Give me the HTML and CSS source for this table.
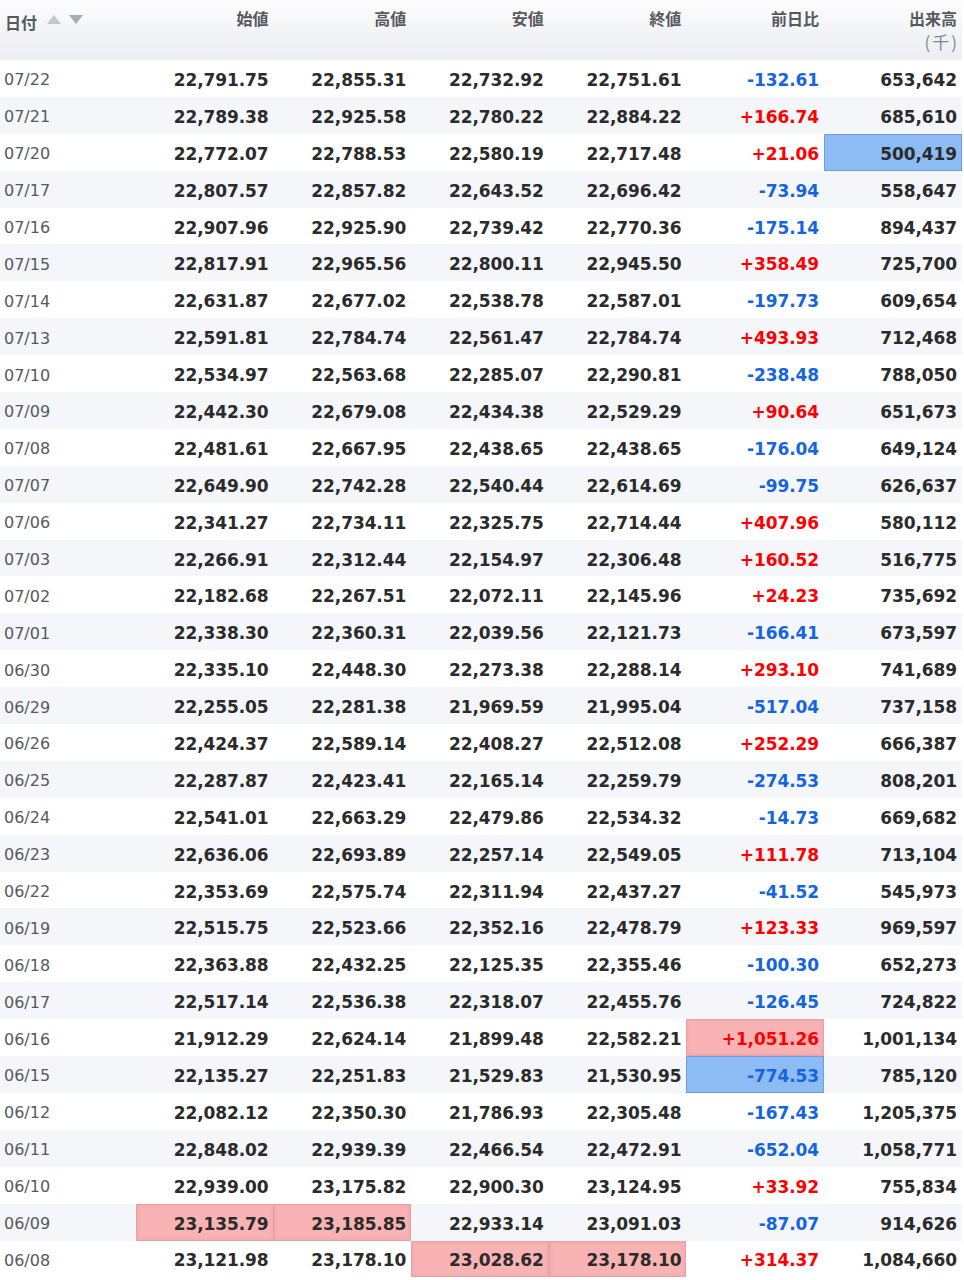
FILE: index.html
```html
<!DOCTYPE html>
<html lang="ja">
<head>
<meta charset="utf-8">
<title>株価履歴</title>
<link rel="stylesheet" href="styles.css">
</head>
<body>
<table class="hist">
  <colgroup>
    <col class="c-date"><col class="c-num"><col class="c-num"><col class="c-num"><col class="c-num"><col class="c-num"><col class="c-vol">
  </colgroup>
  <thead>
    <tr>
      <th class="h-date"><span class="h-label">日付</span><span class="sort"><span class="tri-up"></span><span class="tri-down"></span></span></th>
      <th>始値</th>
      <th>高値</th>
      <th>安値</th>
      <th>終値</th>
      <th>前日比</th>
      <th>出来高<br><span class="unit">(千)</span></th>
    </tr>
  </thead>
  <tbody>
    <tr><td class="d">07/22</td><td>22,791.75</td><td>22,855.31</td><td>22,732.92</td><td>22,751.61</td><td class="dn">-132.61</td><td>653,642</td></tr>
    <tr><td class="d">07/21</td><td>22,789.38</td><td>22,925.58</td><td>22,780.22</td><td>22,884.22</td><td class="up">+166.74</td><td>685,610</td></tr>
    <tr><td class="d">07/20</td><td>22,772.07</td><td>22,788.53</td><td>22,580.19</td><td>22,717.48</td><td class="up">+21.06</td><td class="hl-blue">500,419</td></tr>
    <tr><td class="d">07/17</td><td>22,807.57</td><td>22,857.82</td><td>22,643.52</td><td>22,696.42</td><td class="dn">-73.94</td><td>558,647</td></tr>
    <tr><td class="d">07/16</td><td>22,907.96</td><td>22,925.90</td><td>22,739.42</td><td>22,770.36</td><td class="dn">-175.14</td><td>894,437</td></tr>
    <tr><td class="d">07/15</td><td>22,817.91</td><td>22,965.56</td><td>22,800.11</td><td>22,945.50</td><td class="up">+358.49</td><td>725,700</td></tr>
    <tr><td class="d">07/14</td><td>22,631.87</td><td>22,677.02</td><td>22,538.78</td><td>22,587.01</td><td class="dn">-197.73</td><td>609,654</td></tr>
    <tr><td class="d">07/13</td><td>22,591.81</td><td>22,784.74</td><td>22,561.47</td><td>22,784.74</td><td class="up">+493.93</td><td>712,468</td></tr>
    <tr><td class="d">07/10</td><td>22,534.97</td><td>22,563.68</td><td>22,285.07</td><td>22,290.81</td><td class="dn">-238.48</td><td>788,050</td></tr>
    <tr><td class="d">07/09</td><td>22,442.30</td><td>22,679.08</td><td>22,434.38</td><td>22,529.29</td><td class="up">+90.64</td><td>651,673</td></tr>
    <tr><td class="d">07/08</td><td>22,481.61</td><td>22,667.95</td><td>22,438.65</td><td>22,438.65</td><td class="dn">-176.04</td><td>649,124</td></tr>
    <tr><td class="d">07/07</td><td>22,649.90</td><td>22,742.28</td><td>22,540.44</td><td>22,614.69</td><td class="dn">-99.75</td><td>626,637</td></tr>
    <tr><td class="d">07/06</td><td>22,341.27</td><td>22,734.11</td><td>22,325.75</td><td>22,714.44</td><td class="up">+407.96</td><td>580,112</td></tr>
    <tr><td class="d">07/03</td><td>22,266.91</td><td>22,312.44</td><td>22,154.97</td><td>22,306.48</td><td class="up">+160.52</td><td>516,775</td></tr>
    <tr><td class="d">07/02</td><td>22,182.68</td><td>22,267.51</td><td>22,072.11</td><td>22,145.96</td><td class="up">+24.23</td><td>735,692</td></tr>
    <tr><td class="d">07/01</td><td>22,338.30</td><td>22,360.31</td><td>22,039.56</td><td>22,121.73</td><td class="dn">-166.41</td><td>673,597</td></tr>
    <tr><td class="d">06/30</td><td>22,335.10</td><td>22,448.30</td><td>22,273.38</td><td>22,288.14</td><td class="up">+293.10</td><td>741,689</td></tr>
    <tr><td class="d">06/29</td><td>22,255.05</td><td>22,281.38</td><td>21,969.59</td><td>21,995.04</td><td class="dn">-517.04</td><td>737,158</td></tr>
    <tr><td class="d">06/26</td><td>22,424.37</td><td>22,589.14</td><td>22,408.27</td><td>22,512.08</td><td class="up">+252.29</td><td>666,387</td></tr>
    <tr><td class="d">06/25</td><td>22,287.87</td><td>22,423.41</td><td>22,165.14</td><td>22,259.79</td><td class="dn">-274.53</td><td>808,201</td></tr>
    <tr><td class="d">06/24</td><td>22,541.01</td><td>22,663.29</td><td>22,479.86</td><td>22,534.32</td><td class="dn">-14.73</td><td>669,682</td></tr>
    <tr><td class="d">06/23</td><td>22,636.06</td><td>22,693.89</td><td>22,257.14</td><td>22,549.05</td><td class="up">+111.78</td><td>713,104</td></tr>
    <tr><td class="d">06/22</td><td>22,353.69</td><td>22,575.74</td><td>22,311.94</td><td>22,437.27</td><td class="dn">-41.52</td><td>545,973</td></tr>
    <tr><td class="d">06/19</td><td>22,515.75</td><td>22,523.66</td><td>22,352.16</td><td>22,478.79</td><td class="up">+123.33</td><td>969,597</td></tr>
    <tr><td class="d">06/18</td><td>22,363.88</td><td>22,432.25</td><td>22,125.35</td><td>22,355.46</td><td class="dn">-100.30</td><td>652,273</td></tr>
    <tr><td class="d">06/17</td><td>22,517.14</td><td>22,536.38</td><td>22,318.07</td><td>22,455.76</td><td class="dn">-126.45</td><td>724,822</td></tr>
    <tr><td class="d">06/16</td><td>21,912.29</td><td>22,624.14</td><td>21,899.48</td><td>22,582.21</td><td class="up hl-red">+1,051.26</td><td>1,001,134</td></tr>
    <tr><td class="d">06/15</td><td>22,135.27</td><td>22,251.83</td><td>21,529.83</td><td>21,530.95</td><td class="dn hl-blue">-774.53</td><td>785,120</td></tr>
    <tr><td class="d">06/12</td><td>22,082.12</td><td>22,350.30</td><td>21,786.93</td><td>22,305.48</td><td class="dn">-167.43</td><td>1,205,375</td></tr>
    <tr><td class="d">06/11</td><td>22,848.02</td><td>22,939.39</td><td>22,466.54</td><td>22,472.91</td><td class="dn">-652.04</td><td>1,058,771</td></tr>
    <tr><td class="d">06/10</td><td>22,939.00</td><td>23,175.82</td><td>22,900.30</td><td>23,124.95</td><td class="up">+33.92</td><td>755,834</td></tr>
    <tr><td class="d">06/09</td><td class="hl-red">23,135.79</td><td class="hl-red">23,185.85</td><td>22,933.14</td><td>23,091.03</td><td class="dn">-87.07</td><td>914,626</td></tr>
    <tr><td class="d">06/08</td><td>23,121.98</td><td>23,178.10</td><td class="hl-red">23,028.62</td><td class="hl-red">23,178.10</td><td class="up">+314.37</td><td>1,084,660</td></tr>
  </tbody>
</table>
</body>
</html>
```

FILE: styles.css
```css
html, body {
  margin: 0;
  padding: 0;
  background: #ffffff;
}

.hist {
  width: 962px;
  border-collapse: collapse;
  table-layout: fixed;
  font-family: "DejaVu Sans", Verdana, "Noto Sans CJK JP", sans-serif;
  color: #333333;
}

.c-date { width: 136px; }
.c-num { width: 137.6px; }
.c-vol { width: 138px; }

.hist thead tr {
  height: 60px;
  background: linear-gradient(to bottom, #fdfdfe 0%, #f3f4f6 50%, #eceef1 100%);
}

.hist th {
  font-family: "Noto Sans CJK JP", "DejaVu Sans", sans-serif;
  font-weight: bold;
  font-size: 16px;
  color: #555a60;
  text-align: right;
  vertical-align: top;
  padding: 6px 5px 0 0;
  line-height: 24px;
}

.hist th .unit {
  font-weight: normal;
  color: #85898e;
  font-size: 17px;
  letter-spacing: 2px;
  margin-right: -2px;
}

.hist th.h-date {
  text-align: left;
  padding-left: 5px;
  padding-top: 7px;
}

.h-label {
  display: inline-block;
  vertical-align: middle;
}

.sort {
  display: inline-flex;
  gap: 8px;
  margin-left: 10px;
  vertical-align: middle;
  position: relative;
  top: -2px;
}

.tri-up {
  width: 0;
  height: 0;
  border-left: 7px solid transparent;
  border-right: 7px solid transparent;
  border-bottom: 9px solid #c3c7cc;
}

.tri-down {
  width: 0;
  height: 0;
  border-left: 7px solid transparent;
  border-right: 7px solid transparent;
  border-top: 9px solid #a9adb2;
}

.hist tbody tr {
  height: 36.9px;
}

.hist tbody tr:nth-child(even) {
  background: #f4f6f9;
}

.hist td {
  font-size: 17px;
  font-weight: bold;
  text-align: right;
  padding: 3px 5px 0 0;
  color: #2b2b2b;
  white-space: nowrap;
  letter-spacing: -0.1px;
}

.hist td.d {
  text-align: left;
  font-weight: normal;
  font-size: 16px;
  color: #555a60;
  padding-left: 4px;
  letter-spacing: 0;
}

.hist td.up { color: #ff0000; }
.hist td.dn { color: #1565e0; }

.hist td.hl-red {
  background: #f9b3b4;
  box-shadow: inset 0 0 0 1px #eaa2a4, inset 0 0 4px #e49a9c;
}

.hist td.hl-blue {
  background: #8dbcf4;
  box-shadow: inset 0 0 0 1px #6d9fde;
}
```
